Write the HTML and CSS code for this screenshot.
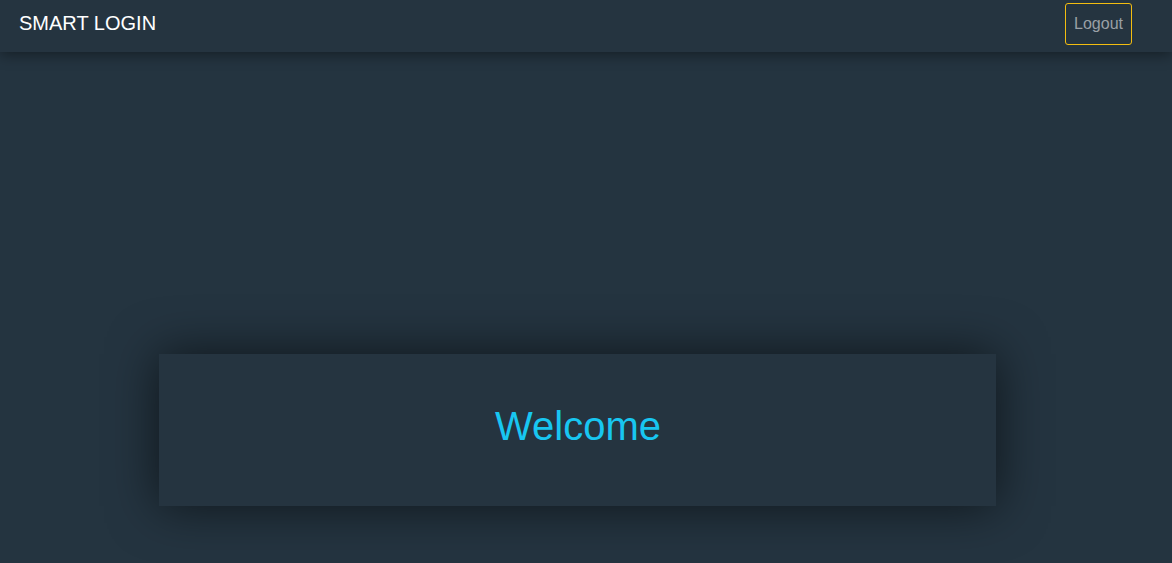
FILE: index.html
```html
<!DOCTYPE html>
<html>
<head>
<meta charset="utf-8">
<link rel="stylesheet" href="styles.css">
</head>
<body>
<nav class="navbar">
  <div class="brand">SMART LOGIN</div>
  <button class="logout">Logout</button>
</nav>
<main class="main">
  <section class="card">
    <h1 class="welcome">Welcome</h1>
  </section>
</main>
</body>
</html>
```
FILE: styles.css
```css
html, body {
  margin: 0;
  padding: 0;
  height: 100%;
}
body {
  background: #243440;
  font-family: "Liberation Sans", Arial, sans-serif;
  overflow: hidden;
}
.navbar {
  position: relative;
  z-index: 2;
  height: 52px;
  background: #253440;
  box-shadow: 0 2px 14px rgba(0, 0, 0, 0.45);
  display: flex;
  align-items: flex-start;
  justify-content: space-between;
  padding: 0 40px 0 20px;
}
.brand {
  color: #ffffff;
  font-size: 20px;
  line-height: 20px;
  margin-top: 13px;
  margin-left: -1px;
}
.logout {
  margin-top: 3px;
  height: 42px;
  width: 67px;
  padding: 0;
  background: transparent;
  border: 1px solid #f3bd10;
  border-radius: 3px;
  color: #9aa0a6;
  font-family: "Liberation Sans", Arial, sans-serif;
  font-size: 16px;
}
.main {
  padding-top: 302px;
  padding-left: 159px;
}
.card {
  width: 837px;
  height: 152px;
  background: #253440;
  box-shadow: 0 0 50px rgba(0, 0, 0, 0.6);
  display: flex;
  align-items: center;
  justify-content: center;
}
.welcome {
  margin: 0;
  color: #18c6f1;
  font-weight: normal;
  font-size: 40px;
  line-height: 40px;
  margin-left: 1px;
  margin-top: -8px;
}
```
